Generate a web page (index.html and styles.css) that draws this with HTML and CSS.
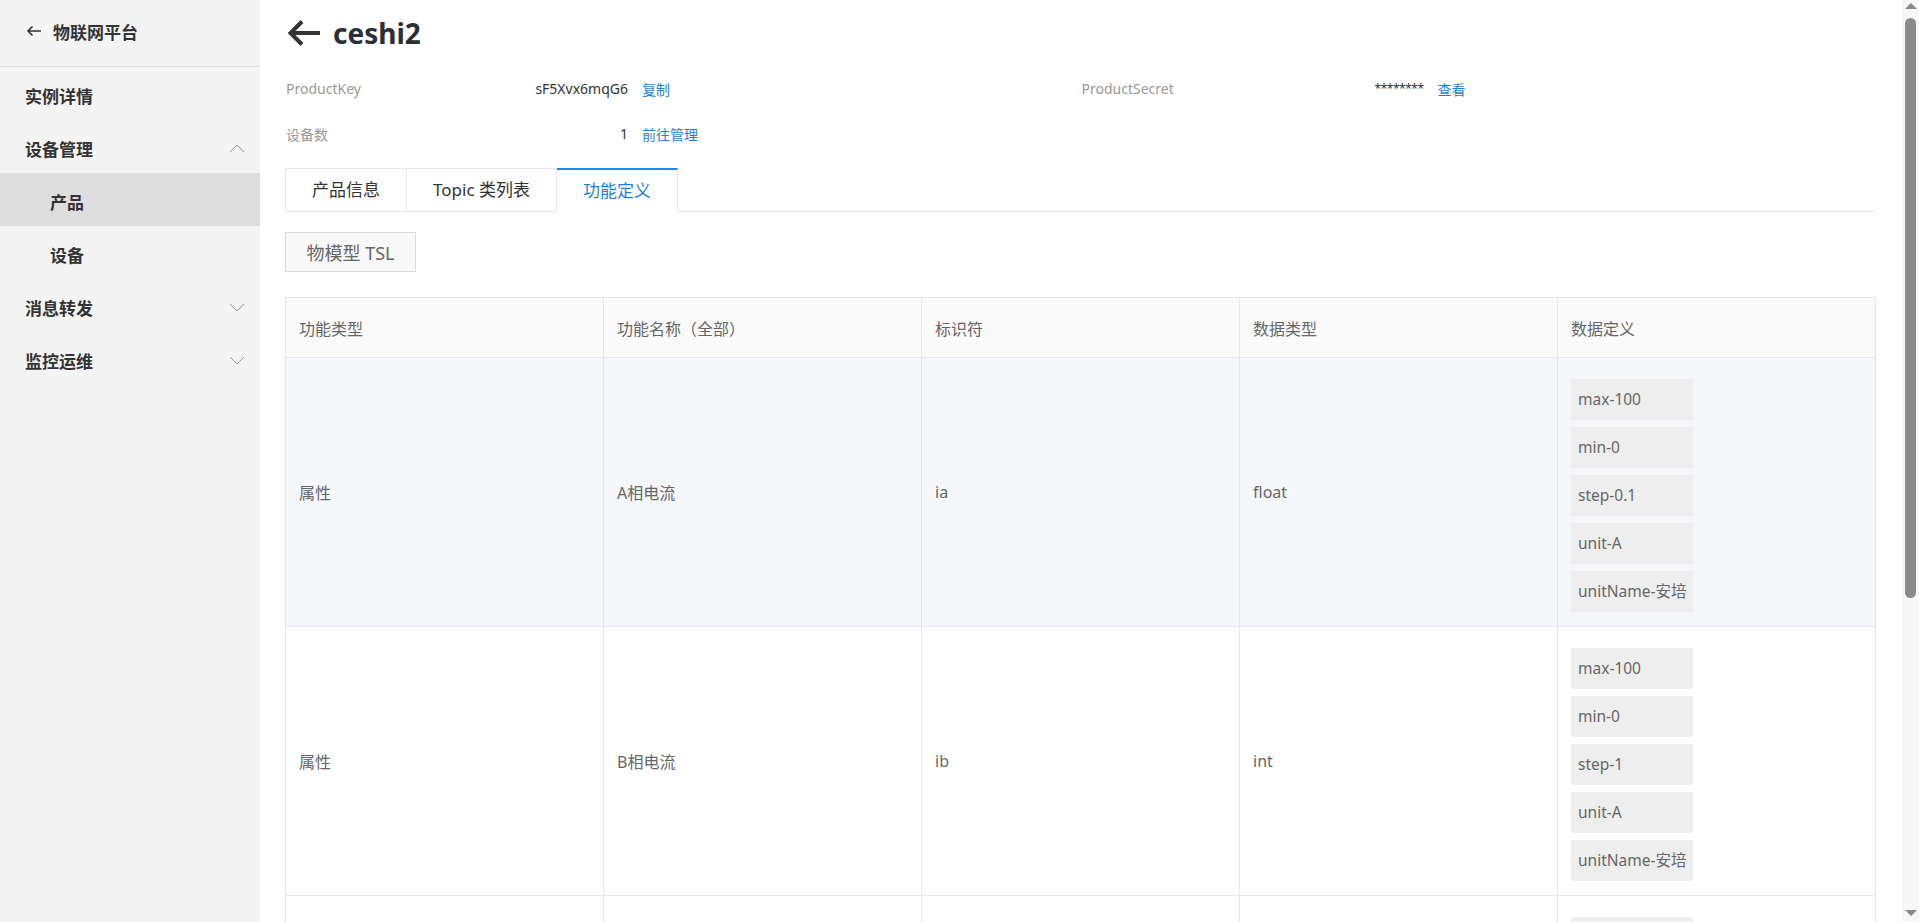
FILE: index.html
```html
<!DOCTYPE html>
<html lang="zh-CN">
<head>
    <meta charset="UTF-8">
    <title>ceshi2 - 物联网平台</title>
    <link rel="stylesheet" href="styles.css">
</head>
<body>
<div class="layout">
    <div class="side">
        <div class="side-head">
            <svg class="side-back" width="16" height="12" viewBox="0 0 16 12">
                <path d="M15 6H2M6.5 1.5L2 6l4.5 4.5" fill="none" stroke="#333" stroke-width="1.6"/>
            </svg>
            物联网平台
        </div>
        <ul class="menu">
            <li class="menu-item">实例详情</li>
            <li class="menu-item">设备管理
                <svg class="caret" width="16" height="9" viewBox="0 0 16 9"><path d="M1 8l7-7 7 7" fill="none" stroke="#999" stroke-width="1"/></svg>
            </li>
            <li class="menu-item sub active">产品</li>
            <li class="menu-item sub">设备</li>
            <li class="menu-item">消息转发
                <svg class="caret" width="16" height="9" viewBox="0 0 16 9"><path d="M1 1l7 7 7-7" fill="none" stroke="#999" stroke-width="1"/></svg>
            </li>
            <li class="menu-item">监控运维
                <svg class="caret" width="16" height="9" viewBox="0 0 16 9"><path d="M1 1l7 7 7-7" fill="none" stroke="#999" stroke-width="1"/></svg>
            </li>
        </ul>
    </div>

    <div class="main">
        <div class="title-bar">
            <svg width="34" height="30" viewBox="0 0 34 30">
                <path d="M33 15H4M15 3.5L3.5 15 15 26.5" fill="none" stroke="#333" stroke-width="4"/>
            </svg>
            <h1>ceshi2</h1>
        </div>

        <div class="info">
            <div class="info-item">
                <span class="info-label">ProductKey</span>
                <span class="info-value">sF5Xvx6mqG6</span>
                <a href="javascript:" class="info-link">复制</a>
            </div>
            <div class="info-item">
                <span class="info-label">ProductSecret</span>
                <span class="info-value secret">********</span>
                <a href="javascript:" class="info-link">查看</a>
            </div>
            <div class="info-item">
                <span class="info-label">设备数</span>
                <span class="info-value">1</span>
                <a href="javascript:" class="info-link">前往管理</a>
            </div>
        </div>

        <div class="tabs">
            <div class="tab">产品信息</div>
            <div class="tab">Topic 类列表</div>
            <div class="tab active">功能定义</div>
        </div>

        <button class="tsl-btn">物模型 TSL</button>

        <table class="fn-table">
            <thead>
            <tr>
                <th>功能类型</th>
                <th>功能名称（全部）</th>
                <th>标识符</th>
                <th>数据类型</th>
                <th>数据定义</th>
            </tr>
            </thead>
            <tbody>
            <tr class="hover">
                <td>属性</td>
                <td>A相电流</td>
                <td>ia</td>
                <td>float</td>
                <td>
                    <div class="specs">
                        <div class="spec">max-100</div>
                        <div class="spec">min-0</div>
                        <div class="spec">step-0.1</div>
                        <div class="spec">unit-A</div>
                        <div class="spec">unitName-安培</div>
                    </div>
                </td>
            </tr>
            <tr>
                <td>属性</td>
                <td>B相电流</td>
                <td>ib</td>
                <td>int</td>
                <td>
                    <div class="specs">
                        <div class="spec">max-100</div>
                        <div class="spec">min-0</div>
                        <div class="spec">step-1</div>
                        <div class="spec">unit-A</div>
                        <div class="spec">unitName-安培</div>
                    </div>
                </td>
            </tr>
            <tr>
                <td>属性</td>
                <td>C相电流</td>
                <td>ic</td>
                <td>float</td>
                <td>
                    <div class="specs">
                        <div class="spec">max-100</div>
                        <div class="spec">min-0</div>
                        <div class="spec">step-0.1</div>
                        <div class="spec">unit-A</div>
                        <div class="spec">unitName-安培</div>
                    </div>
                </td>
            </tr>
            <tr>
                <td>属性</td>
                <td>A相电压</td>
                <td>ua</td>
                <td>float</td>
                <td>
                    <div class="specs">
                        <div class="spec">max-500</div>
                        <div class="spec">min-0</div>
                        <div class="spec">step-0.1</div>
                        <div class="spec">unit-V</div>
                        <div class="spec">unitName-伏特</div>
                    </div>
                </td>
            </tr>
            </tbody>
        </table>
    </div>

    <!-- 浏览器滚动条 -->
    <div class="scrollbar">
        <span class="sb-up"></span>
        <span class="sb-thumb"></span>
        <span class="sb-down"></span>
    </div>
</div>
</body>
</html>
```

FILE: styles.css
```css
* {
    margin: 0;
    padding: 0;
    box-sizing: border-box;
}

body {
    font-family: "Noto Sans", "Noto Sans CJK SC", sans-serif;
    color: #333;
    background: #fff;
}

.layout {
    display: flex;
    min-height: 100vh;
}

/* 左侧菜单 */
.side {
    width: 260px;
    flex-shrink: 0;
    background: #f4f4f4;
}

.side-head {
    height: 67px;
    display: flex;
    align-items: center;
    gap: 11px;
    padding: 0 0 4px 26px;
    border-bottom: 1px solid #dedede;
    font-size: 17px;
    font-weight: bold;
    color: #333;
}

.menu {
    list-style: none;
}

.menu-item {
    height: 53px;
    padding: 3px 15px 0 25px;
    display: flex;
    align-items: center;
    justify-content: space-between;
    font-size: 17px;
    font-weight: bold;
    color: #333;
}

.menu-item.sub {
    padding-left: 50px;
}

.menu-item.active {
    background: #dedede;
}

/* 右侧内容 */
.main {
    flex: 1;
    min-width: 0;
    padding: 0 26px 40px 25px;
}

.title-bar {
    height: 66px;
    display: flex;
    align-items: center;
    gap: 12px;
    padding-left: 2px;
}

.title-bar h1 {
    font-size: 28px;
    font-weight: bold;
    color: #2b2f36;
}

.info {
    display: flex;
    flex-wrap: wrap;
}

.info-item {
    width: 50%;
    height: 45px;
    display: flex;
    align-items: center;
    font-size: 14px;
    padding-left: 1px;
}

.info-label {
    width: 150px;
    color: #999;
}

.info-value {
    width: 192px;
    text-align: right;
    color: #333;
}

.info-value.secret {
    font-size: 12px;
    letter-spacing: -0.5px;
}

.info-link {
    margin-left: 14px;
    color: #1e7fe0;
    text-decoration: none;
}

.tabs {
    display: flex;
    margin-top: 12px;
    border-bottom: 1px solid #e4e7ed;
}

.tab {
    height: 44px;
    padding: 0 26px;
    margin-bottom: -1px;
    border: 1px solid #e4e7ed;
    border-left: none;
    line-height: 42px;
    font-size: 17px;
    color: #333;
    background: #fff;
}

.tab:first-child {
    border-left: 1px solid #e4e7ed;
}

.tab.active {
    border-top: 2px solid #1e88e5;
    border-bottom-color: #fff;
    line-height: 41px;
    color: #1e7fe0;
}

.tsl-btn {
    display: block;
    margin-top: 20px;
    width: 131px;
    height: 40px;
    border: 1px solid #dcdcdc;
    background: #f8f8f8;
    font-family: inherit;
    font-size: 18px;
    color: #666;
}

.fn-table {
    width: 100%;
    margin-top: 25px;
    border-collapse: collapse;
    table-layout: fixed;
    font-size: 16px;
    color: #666;
}

.fn-table th,
.fn-table td {
    border: 1px solid #e4e7ed;
    text-align: left;
    font-weight: normal;
    padding: 14px 13px;
    vertical-align: middle;
}

.fn-table th {
    height: 60px;
    padding-top: 0;
    padding-bottom: 0;
    background: #fafafa;
}

.fn-table tr.hover td {
    background: #f5f7fa;
}

.specs {
    display: inline-block;
}

.spec {
    margin-top: 7px;
    height: 41px;
    line-height: 41px;
    padding: 0 7px;
    background: #eee;
    font-size: 15.5px;
    color: #666;
    white-space: nowrap;
}

/* 滚动条 */
.scrollbar {
    width: 17px;
    flex-shrink: 0;
    height: 100vh;
    position: sticky;
    top: 0;
    align-self: flex-start;
    display: flex;
    flex-direction: column;
    align-items: center;
    padding: 3px 0;
    background: #f7f7f7;
}

.sb-up,
.sb-down {
    width: 0;
    height: 0;
    border-left: 6px solid transparent;
    border-right: 6px solid transparent;
}

.sb-up {
    border-bottom: 6px solid #8a8a8a;
}

.sb-down {
    margin-top: auto;
    margin-bottom: 3px;
    border-top: 6px solid #8a8a8a;
}

.sb-thumb {
    width: 11px;
    height: 580px;
    margin-top: 9px;
    border-radius: 6px;
    background: #8a8a8a;
}
```
